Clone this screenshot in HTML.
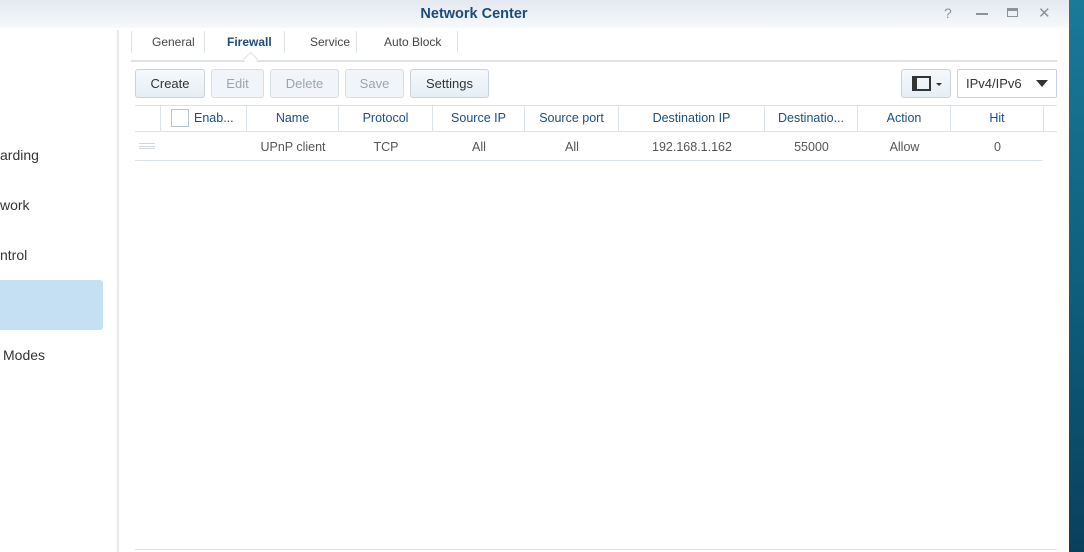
<!DOCTYPE html>
<html><head><style>
*{margin:0;padding:0;box-sizing:border-box}
body{width:1084px;height:552px;overflow:hidden;background:#fff;font-family:"Liberation Sans",sans-serif;position:relative;font-size:13px}
.a{position:absolute}
.title{left:0;top:0;width:1069px;height:28px;background:linear-gradient(#e3e9ef,#f7f9fb);}
.bg{left:1069px;top:0;width:15px;height:552px;background:linear-gradient(#1a7a98,#0d5a78 60%,#0a3f5c)}
.side{font-size:14px;color:#333}
.tab{top:35px;font-size:12px;color:#444}
.sep{top:31px;width:1px;height:22px;background:#dde3e8}
.btn{top:69px;height:29px;border:1px solid #c6d2dd;border-radius:3px;background:linear-gradient(#f6f9fc,#e6eef5);font-size:13px;color:#333;text-align:center;line-height:27px}
.dis{color:#9aa4ad;background:#f1f5f9;border-color:#d6dee5}
.h{top:106px;height:25px;line-height:25px;text-align:center;color:#1b4f80;font-size:12.5px;border-right:1px solid #dbe3ea}
.c{top:133px;height:28px;line-height:28px;text-align:center;color:#555;font-size:12.5px}
</style></head><body>
<div class="a title"></div>
<div class="a" style="left:0;top:6px;width:948px;text-align:center;font-weight:bold;color:#1c4b78;font-size:14.5px">Network Center</div>
<div class="a" style="left:944px;top:5px;color:#8a939b;font-size:14px">?</div>
<div class="a" style="left:976px;top:13px;width:12px;height:1.5px;background:#8a939b"></div>
<div class="a" style="left:1007px;top:8px;width:11px;height:9px;border:1.5px solid #8a939b;border-top-width:3px"></div>
<div class="a" style="left:1038px;top:4px;color:#8a939b;font-size:15px">✕</div>
<div class="a bg"></div>
<div class="a" style="left:117px;top:30px;width:2px;height:522px;background:#e6e9ec"></div>
<div class="a side" style="left:0;top:147px">arding</div>
<div class="a side" style="left:0;top:197px">work</div>
<div class="a side" style="left:0;top:247px">ntrol</div>
<div class="a" style="left:0;top:280px;width:103px;height:50px;background:#c5e0f3;border-radius:0 3px 3px 0"></div>
<div class="a side" style="left:3px;top:347px">Modes</div>
<div class="a sep" style="left:131px"></div>
<div class="a tab" style="left:152px">General</div>
<div class="a sep" style="left:204px"></div>
<div class="a tab" style="left:227px;font-weight:bold;color:#1c4b78">Firewall</div>
<div class="a sep" style="left:284px"></div>
<div class="a tab" style="left:310px">Service</div>
<div class="a sep" style="left:356px"></div>
<div class="a tab" style="left:384px">Auto Block</div>
<div class="a sep" style="left:457px"></div>
<div class="a" style="left:131px;top:60px;width:926px;height:2px;background:#dde2e7"></div>
<div class="a" style="left:245px;top:54px;width:11px;height:11px;background:#fff;border-left:1px solid #dde2e7;border-top:1px solid #dde2e7;transform:rotate(45deg)"></div>
<div class="a btn" style="left:135px;width:70px">Create</div>
<div class="a btn dis" style="left:211px;width:53px">Edit</div>
<div class="a btn dis" style="left:270px;width:69px">Delete</div>
<div class="a btn dis" style="left:345px;width:59px">Save</div>
<div class="a btn" style="left:410px;width:79px">Settings</div>
<div class="a btn" style="left:901px;width:50px"></div>
<div class="a" style="left:912px;top:76px;width:19px;height:15px;border:2px solid #333;border-left-width:5px"></div>
<div class="a" style="left:936px;top:83px;border:3px solid transparent;border-top:3px solid #333"></div>
<div class="a" style="left:957px;top:69px;width:100px;height:29px;border:1px solid #c6d2dd;border-radius:2px;line-height:27px;padding-left:8px;color:#333;font-size:13px">IPv4/IPv6</div>
<div class="a" style="left:1036px;top:80px;border:6px solid transparent;border-top:7px solid #333;border-bottom:0"></div>
<div class="a" style="left:135px;top:105px;width:922px;height:1px;background:#dbe3ea"></div>
<div class="a" style="left:135px;top:131px;width:922px;height:1px;background:#dbe3ea"></div>
<div class="a" style="left:135px;top:160px;width:908px;height:1px;background:#dbe3ea"></div>
<div class="a" style="left:135px;top:549px;width:922px;height:1px;background:#dbe3ea"></div>
<div class="a h" style="left:135px;width:26px"></div>
<div class="a h" style="left:161px;width:86px;text-align:left;padding-left:33px">Enab...</div>
<div class="a" style="left:171px;top:109px;width:18px;height:18px;border:1px solid #b8c3cc;background:#fff"></div>
<div class="a h" style="left:247px;width:92px">Name</div>
<div class="a h" style="left:339px;width:94px">Protocol</div>
<div class="a h" style="left:433px;width:92px">Source IP</div>
<div class="a h" style="left:525px;width:94px">Source port</div>
<div class="a h" style="left:619px;width:146px">Destination IP</div>
<div class="a h" style="left:765px;width:93px">Destinatio...</div>
<div class="a h" style="left:858px;width:93px">Action</div>
<div class="a h" style="left:951px;width:93px">Hit</div>
<div class="a" style="left:139px;top:143px;width:16px;height:6px;border-top:1px solid #d0d6dc;border-bottom:1px solid #d0d6dc"></div>
<div class="a" style="left:139px;top:146px;width:16px;height:1px;background:#d0d6dc"></div>
<div class="a c" style="left:247px;width:92px">UPnP client</div>
<div class="a c" style="left:339px;width:94px">TCP</div>
<div class="a c" style="left:433px;width:92px">All</div>
<div class="a c" style="left:525px;width:94px">All</div>
<div class="a c" style="left:619px;width:146px">192.168.1.162</div>
<div class="a c" style="left:765px;width:93px">55000</div>
<div class="a c" style="left:858px;width:93px">Allow</div>
<div class="a c" style="left:951px;width:93px">0</div>
</body></html>
